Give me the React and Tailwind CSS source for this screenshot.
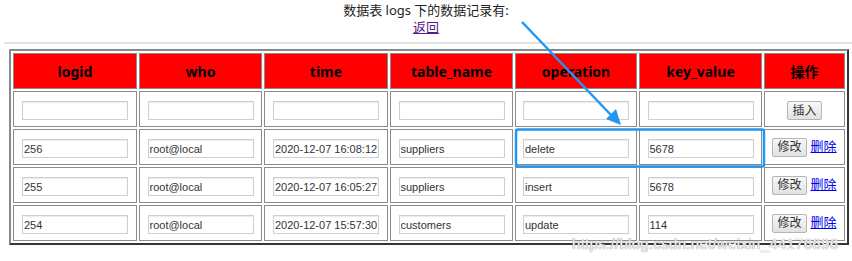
import React from 'react'

const rows = [
  { id: '256', who: 'root@local', time: '2020-12-07 16:08:12', table: 'suppliers', op: 'delete', key: '5678' },
  { id: '255', who: 'root@local', time: '2020-12-07 16:05:27', table: 'suppliers', op: 'insert', key: '5678' },
  { id: '254', who: 'root@local', time: '2020-12-07 15:57:30', table: 'customers', op: 'update', key: '114' },
]

const headers = [
  ['logid', 'w-[124px]'],
  ['who', 'w-[123px]'],
  ['time', 'w-[124px]'],
  ['table_name', 'w-[123px]'],
  ['operation', 'w-[122px]'],
  ['key_value', 'w-[123px]'],
  ['操作', 'w-[81px]'],
]

function Field({ value }) {
  return (
    <input
      readOnly
      defaultValue={value}
      className="w-[106px] h-[19px] border border-[#cfcfcf] shadow-[inset_0_1px_1px_rgba(0,0,0,0.08)] px-[1px] text-[11px] text-[#333] bg-white align-middle outline-none"
      style={{ fontFamily: '"Liberation Sans", Arial, sans-serif' }}
    />
  )
}

function Btn({ children }) {
  return (
    <button className="h-[19px] px-[4px] border border-[#b5b5b5] rounded-[2px] bg-gradient-to-b from-[#f8f8f8] to-[#e2e2e2] text-[12px] leading-none text-[#333] align-middle">
      {children}
    </button>
  )
}

const cell = 'h-[36px] p-0 border border-[#8c8c8c] text-center align-middle'

export default function App() {
  return (
    <div className="relative w-[852px] h-[261px] bg-white overflow-hidden" style={{ fontFamily: '"Noto Sans", "Noto Sans CJK SC", sans-serif' }}>
      <div className="pt-[2px] text-center text-[13px] leading-[17px] text-[#222]">
        <div>数据表 logs 下的数据记录有:</div>
        <a href="#" className="text-[#551a8b] underline">返回</a>
      </div>
      <hr className="mt-[6px] ml-[4px] border-0 h-[2px] bg-[#e2e2e2]" />

      <table className="mt-[5px] ml-[9px] w-[840px] table-fixed border-separate border-spacing-[2px] border-2 border-[#8a8a8a] [border-style:outset]">
        <thead>
          <tr>
            {headers.map(([h, w]) => (
              <th key={h} className={`${cell} ${w} bg-[#ff0000] text-[14px] font-bold text-black`}>
                {h}
              </th>
            ))}
          </tr>
        </thead>
        <tbody>
          <tr>
            {[0, 1, 2, 3, 4, 5].map(i => (
              <td key={i} className={cell}><Field value="" /></td>
            ))}
            <td className={cell}><Btn>插入</Btn></td>
          </tr>
          {rows.map(r => (
            <tr key={r.id}>
              <td className={cell}><Field value={r.id} /></td>
              <td className={cell}><Field value={r.who} /></td>
              <td className={cell}><Field value={r.time} /></td>
              <td className={cell}><Field value={r.table} /></td>
              <td className={cell}><Field value={r.op} /></td>
              <td className={cell}><Field value={r.key} /></td>
              <td className={cell}>
                <div className="flex items-center justify-center gap-[4px]">
                  <Btn>修改</Btn>
                  <a href="#" className="text-[13px] text-[#0000ee] underline">删除</a>
                </div>
              </td>
            </tr>
          ))}
        </tbody>
      </table>

      {/* annotation overlay */}
      <svg className="absolute left-0 top-0 pointer-events-none" width="852" height="261">
        <line x1="522" y1="22" x2="611" y2="115" stroke="#2196f3" strokeWidth="2.5" />
        <polygon points="621,125 606,119 616,109" fill="#2196f3" />
        <rect x="516" y="129.5" width="248" height="37" rx="2" fill="none" stroke="#2196f3" strokeWidth="2.5" />
      </svg>
      <div
        className="absolute left-[572px] top-[233px] text-[15px] text-[#f0f0f0] tracking-[0.3px] pointer-events-none"
        style={{ fontFamily: '"Liberation Sans", Arial, sans-serif', textShadow: '0 0 1px #999, 0 0 1px #999' }}
      >
        https://blog.csdn.net/weixin_44176696
      </div>
    </div>
  )
}
